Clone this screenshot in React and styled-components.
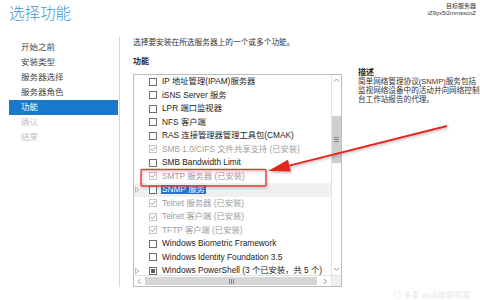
import React from "react";
import styled, { createGlobalStyle } from "styled-components";

const GlobalStyle = createGlobalStyle`
  html, body {
    margin: 0;
    padding: 0;
    background: #fff;
  }
  #root {
    width: 480px;
    height: 300px;
    overflow: hidden;
  }
`;

const FONT = `"Liberation Sans", "Noto Sans CJK SC", sans-serif`;

const navItems = [
  { label: "开始之前" },
  { label: "安装类型" },
  { label: "服务器选择" },
  { label: "服务器角色" },
  { label: "功能", active: true },
  { label: "确认", disabled: true },
  { label: "结果", disabled: true },
];

const features = [
  { label: "IP 地址管理(IPAM)服务器" },
  { label: "iSNS Server 服务" },
  { label: "LPR 端口监视器" },
  { label: "NFS 客户端" },
  { label: "RAS 连接管理器管理工具包(CMAK)" },
  { label: "SMB 1.0/CIFS 文件共享支持 (已安装)", installed: true },
  { label: "SMB Bandwidth Limit" },
  { label: "SMTP 服务器 (已安装)", installed: true },
  { label: "SNMP 服务", expandable: true, selected: true },
  { label: "Telnet 服务器 (已安装)", installed: true },
  { label: "Telnet 客户端 (已安装)", installed: true },
  { label: "TFTP 客户端 (已安装)", installed: true },
  { label: "Windows Biometric Framework" },
  { label: "Windows Identity Foundation 3.5" },
  { label: "Windows PowerShell (3 个已安装，共 5 个)", expandable: true, partial: true },
];

const Page = styled.div`
  position: relative;
  width: 480px;
  height: 300px;
  overflow: hidden;
  background: #fff;
  font-family: ${FONT};
  color: #333;
`;

const Header = styled.div`
  display: flex;
  justify-content: space-between;
  height: 37px;
`;

const Title = styled.div`
  padding: 4px 0 0 9px;
  font-size: 15.5px;
  line-height: 20px;
  font-weight: 300;
  color: #3b97d3;
`;

const ServerInfo = styled.div`
  padding: 2.5px 4px 0 0;
  text-align: right;
  font-size: 6px;
  line-height: 7.5px;
  color: #333;
`;

const Main = styled.div`
  display: flex;
  align-items: flex-start;
`;

const Nav = styled.div`
  box-sizing: border-box;
  width: 120px;
  height: 250px;
  padding: 3px 1px 0 9px;
  border-right: 1px solid #d6d6d6;
  flex-shrink: 0;
`;

const NavItem = styled.div`
  height: 15px;
  line-height: 15px;
  padding-left: 12px;
  font-size: 8.5px;
  color: ${(p) => (p.$active ? "#fff" : p.$disabled ? "#c4c4c4" : "#444")};
  background: ${(p) => (p.$active ? "#1979ca" : "transparent")};
`;

const Content = styled.div`
  display: flex;
  flex-direction: column;
  padding-left: 13px;
`;

const Intro = styled.div`
  margin-top: 1px;
  font-size: 7.7px;
  line-height: 10px;
  color: #333;
  white-space: nowrap;
`;

const Columns = styled.div`
  display: flex;
  margin-top: 9px;
`;

const FeatureCol = styled.div`
  width: 209px;
  flex-shrink: 0;
`;

const SectionLabel = styled.div`
  font-size: 8px;
  line-height: 10px;
  font-weight: bold;
  color: #222;
`;

const ListBox = styled.div`
  box-sizing: border-box;
  margin-top: 7px;
  width: 209px;
  height: 213px;
  border: 1px solid #bdbdbd;
  display: grid;
  grid-template-columns: 1fr 10px;
  grid-template-rows: 1fr 11px;
`;

const Rows = styled.div`
  overflow: hidden;
`;

const Row = styled.div`
  display: flex;
  align-items: center;
  height: 13.5px;
  white-space: nowrap;
  background: ${(p) => (p.$selected ? "#f0f0f0" : "transparent")};
`;

const Expander = styled.div`
  width: 15px;
  flex-shrink: 0;
  display: flex;
  align-items: center;
  padding-left: 1px;
  box-sizing: border-box;
`;

const Box = styled.div`
  box-sizing: border-box;
  width: 8px;
  height: 8px;
  flex-shrink: 0;
  border: 1px solid ${(p) => (p.$installed ? "#c6c6c6" : "#6f6f6f")};
  background: #fff;
  display: flex;
  align-items: center;
  justify-content: center;
`;

const Mixed = styled.div`
  width: 4px;
  height: 4px;
  background: #5c5c5c;
`;

const Label = styled.span`
  margin-left: 4px;
  padding: 0 1px;
  font-size: 8.3px;
  line-height: 9px;
  color: ${(p) => (p.$selected ? "#fff" : p.$installed ? "#9c9c9c" : "#222")};
  background: ${(p) => (p.$selected ? "#2f6fd3" : "transparent")};
`;

const VScroll = styled.div`
  display: flex;
  flex-direction: column;
  border-left: 1px solid #e2e2e2;
  background: #fff;
`;

const HScroll = styled.div`
  display: flex;
  border-top: 1px solid #e2e2e2;
  background: #fff;
`;

const Corner = styled.div`
  background: #f0f0f0;
  border-top: 1px solid #e2e2e2;
  border-left: 1px solid #e2e2e2;
`;

const ArrowBtn = styled.div`
  flex-shrink: 0;
  width: ${(p) => (p.$horizontal ? "11px" : "auto")};
  height: ${(p) => (p.$horizontal ? "auto" : "11px")};
  display: flex;
  align-items: center;
  justify-content: center;
`;

const Track = styled.div`
  flex: 1;
  display: flex;
  flex-direction: ${(p) => (p.$horizontal ? "row" : "column")};
`;

const VThumb = styled.div`
  margin-top: 30px;
  height: 47px;
  background: #cdcdcd;
  display: flex;
  align-items: center;
  justify-content: center;
`;

const HThumb = styled.div`
  width: 172px;
  margin: 1px 0;
  background: #d6d6d6;
  display: flex;
  align-items: center;
  justify-content: center;
`;

const DescCol = styled.div`
  flex-shrink: 0;
  width: 123px;
  margin: 11px 0 0 16px;
`;

const DescText = styled.div`
  margin-top: -1px;
  font-size: 7.6px;
  line-height: 9px;
  color: #333;
`;

const Overlay = styled.svg`
  position: absolute;
  left: 0;
  top: 0;
  pointer-events: none;
`;

const Watermark = styled.div`
  position: absolute;
  right: 10px;
  bottom: 0;
  font-size: 8px;
  line-height: 9px;
  color: #e6e6e6;
  white-space: nowrap;
`;

const Chevron = ({ dir }) => {
  const pts = {
    up: "1,4.5 3.5,2 6,4.5",
    down: "1,2 3.5,4.5 6,2",
    left: "4.5,1 2,3.5 4.5,6",
    right: "2,1 4.5,3.5 2,6",
  }[dir];
  return (
    <svg width="7" height="7" viewBox="0 0 7 7">
      <polyline points={pts} fill="none" stroke="#8a8a8a" strokeWidth="0.9" />
    </svg>
  );
};

const Check = () => (
  <svg width="6" height="6" viewBox="0 0 6 6">
    <polyline points="0.8,3 2.4,4.6 5.3,1.2" fill="none" stroke="#9a9a9a" strokeWidth="1" />
  </svg>
);

const Triangle = () => (
  <svg width="5" height="6" viewBox="0 0 5 6">
    <polygon points="0.5,0.5 4,3 0.5,5.5" fill="none" stroke="#a6a6a6" strokeWidth="0.8" />
  </svg>
);

const Grip = ({ vertical }) =>
  vertical ? (
    <svg width="5" height="5" viewBox="0 0 5 5">
      <path d="M0 0.5H5M0 2.5H5M0 4.5H5" stroke="#7d7d7d" strokeWidth="0.9" />
    </svg>
  ) : (
    <svg width="5" height="5" viewBox="0 0 5 5">
      <path d="M0.5 0V5M2.5 0V5M4.5 0V5" stroke="#7d7d7d" strokeWidth="0.9" />
    </svg>
  );

const FeatureRow = ({ item }) => (
  <Row $selected={item.selected}>
    <Expander>{item.expandable && <Triangle />}</Expander>
    <Box $installed={item.installed}>
      {item.installed && <Check />}
      {item.partial && <Mixed />}
    </Box>
    <Label $installed={item.installed} $selected={item.selected}>
      {item.label}
    </Label>
  </Row>
);

// red annotation: box round the SMTP row and an arrow pointing at it
const Annotation = () => {
  const tip = [268, 171];
  const start = [447, 126];
  const dx = start[0] - tip[0];
  const dy = start[1] - tip[1];
  const len = Math.hypot(dx, dy);
  const ux = dx / len;
  const uy = dy / len;
  const bx = tip[0] + ux * 22;
  const by = tip[1] + uy * 22;
  const w1 = [bx - uy * 6, by + ux * 6];
  const w2 = [bx + uy * 6, by - ux * 6];
  return (
    <Overlay width="480" height="300" viewBox="0 0 480 300">
      <defs>
        <filter id="sh" x="-10%" y="-10%" width="120%" height="130%">
          <feDropShadow dx="1" dy="1.5" stdDeviation="1" floodColor="#000" floodOpacity="0.25" />
        </filter>
      </defs>
      <g filter="url(#sh)">
        <rect x="141" y="169.5" width="125" height="16.5" rx="1" fill="none" stroke="#e03a3a" strokeWidth="1.4" />
        <line x1={start[0]} y1={start[1]} x2={bx} y2={by} stroke="#e4271f" strokeWidth="2" />
        <polygon
          points={`${tip[0]},${tip[1]} ${w1[0]},${w1[1]} ${w2[0]},${w2[1]}`}
          fill="#e4271f"
        />
      </g>
    </Overlay>
  );
};

export default function App() {
  return (
    <>
      <GlobalStyle />
      <Page>
        <Header>
          <Title>选择功能</Title>
          <ServerInfo>
            <div>目标服务器</div>
            <div>iZ9yx5l2mmsscnZ</div>
          </ServerInfo>
        </Header>
        <Main>
          <Nav>
            {navItems.map((n) => (
              <NavItem key={n.label} $active={n.active} $disabled={n.disabled}>
                {n.label}
              </NavItem>
            ))}
          </Nav>
          <Content>
            <Intro>选择要安装在所选服务器上的一个或多个功能。</Intro>
            <Columns>
              <FeatureCol>
                <SectionLabel>功能</SectionLabel>
                <ListBox>
                  <Rows>
                    {features.map((f) => (
                      <FeatureRow key={f.label} item={f} />
                    ))}
                  </Rows>
                  <VScroll>
                    <ArrowBtn>
                      <Chevron dir="up" />
                    </ArrowBtn>
                    <Track>
                      <VThumb>
                        <Grip vertical />
                      </VThumb>
                    </Track>
                    <ArrowBtn>
                      <Chevron dir="down" />
                    </ArrowBtn>
                  </VScroll>
                  <HScroll>
                    <ArrowBtn $horizontal>
                      <Chevron dir="left" />
                    </ArrowBtn>
                    <Track $horizontal>
                      <HThumb>
                        <Grip />
                      </HThumb>
                    </Track>
                    <ArrowBtn $horizontal>
                      <Chevron dir="right" />
                    </ArrowBtn>
                  </HScroll>
                  <Corner />
                </ListBox>
              </FeatureCol>
              <DescCol>
                <SectionLabel>描述</SectionLabel>
                <DescText>
                  简单网络管理协议(SNMP)服务包括监视网络设备中的活动并向网络控制台工作站报告的代理。
                </DescText>
              </DescCol>
            </Columns>
          </Content>
        </Main>
        <Annotation />
        <Watermark>◎ 头条 @运维那些事</Watermark>
      </Page>
    </>
  );
}
